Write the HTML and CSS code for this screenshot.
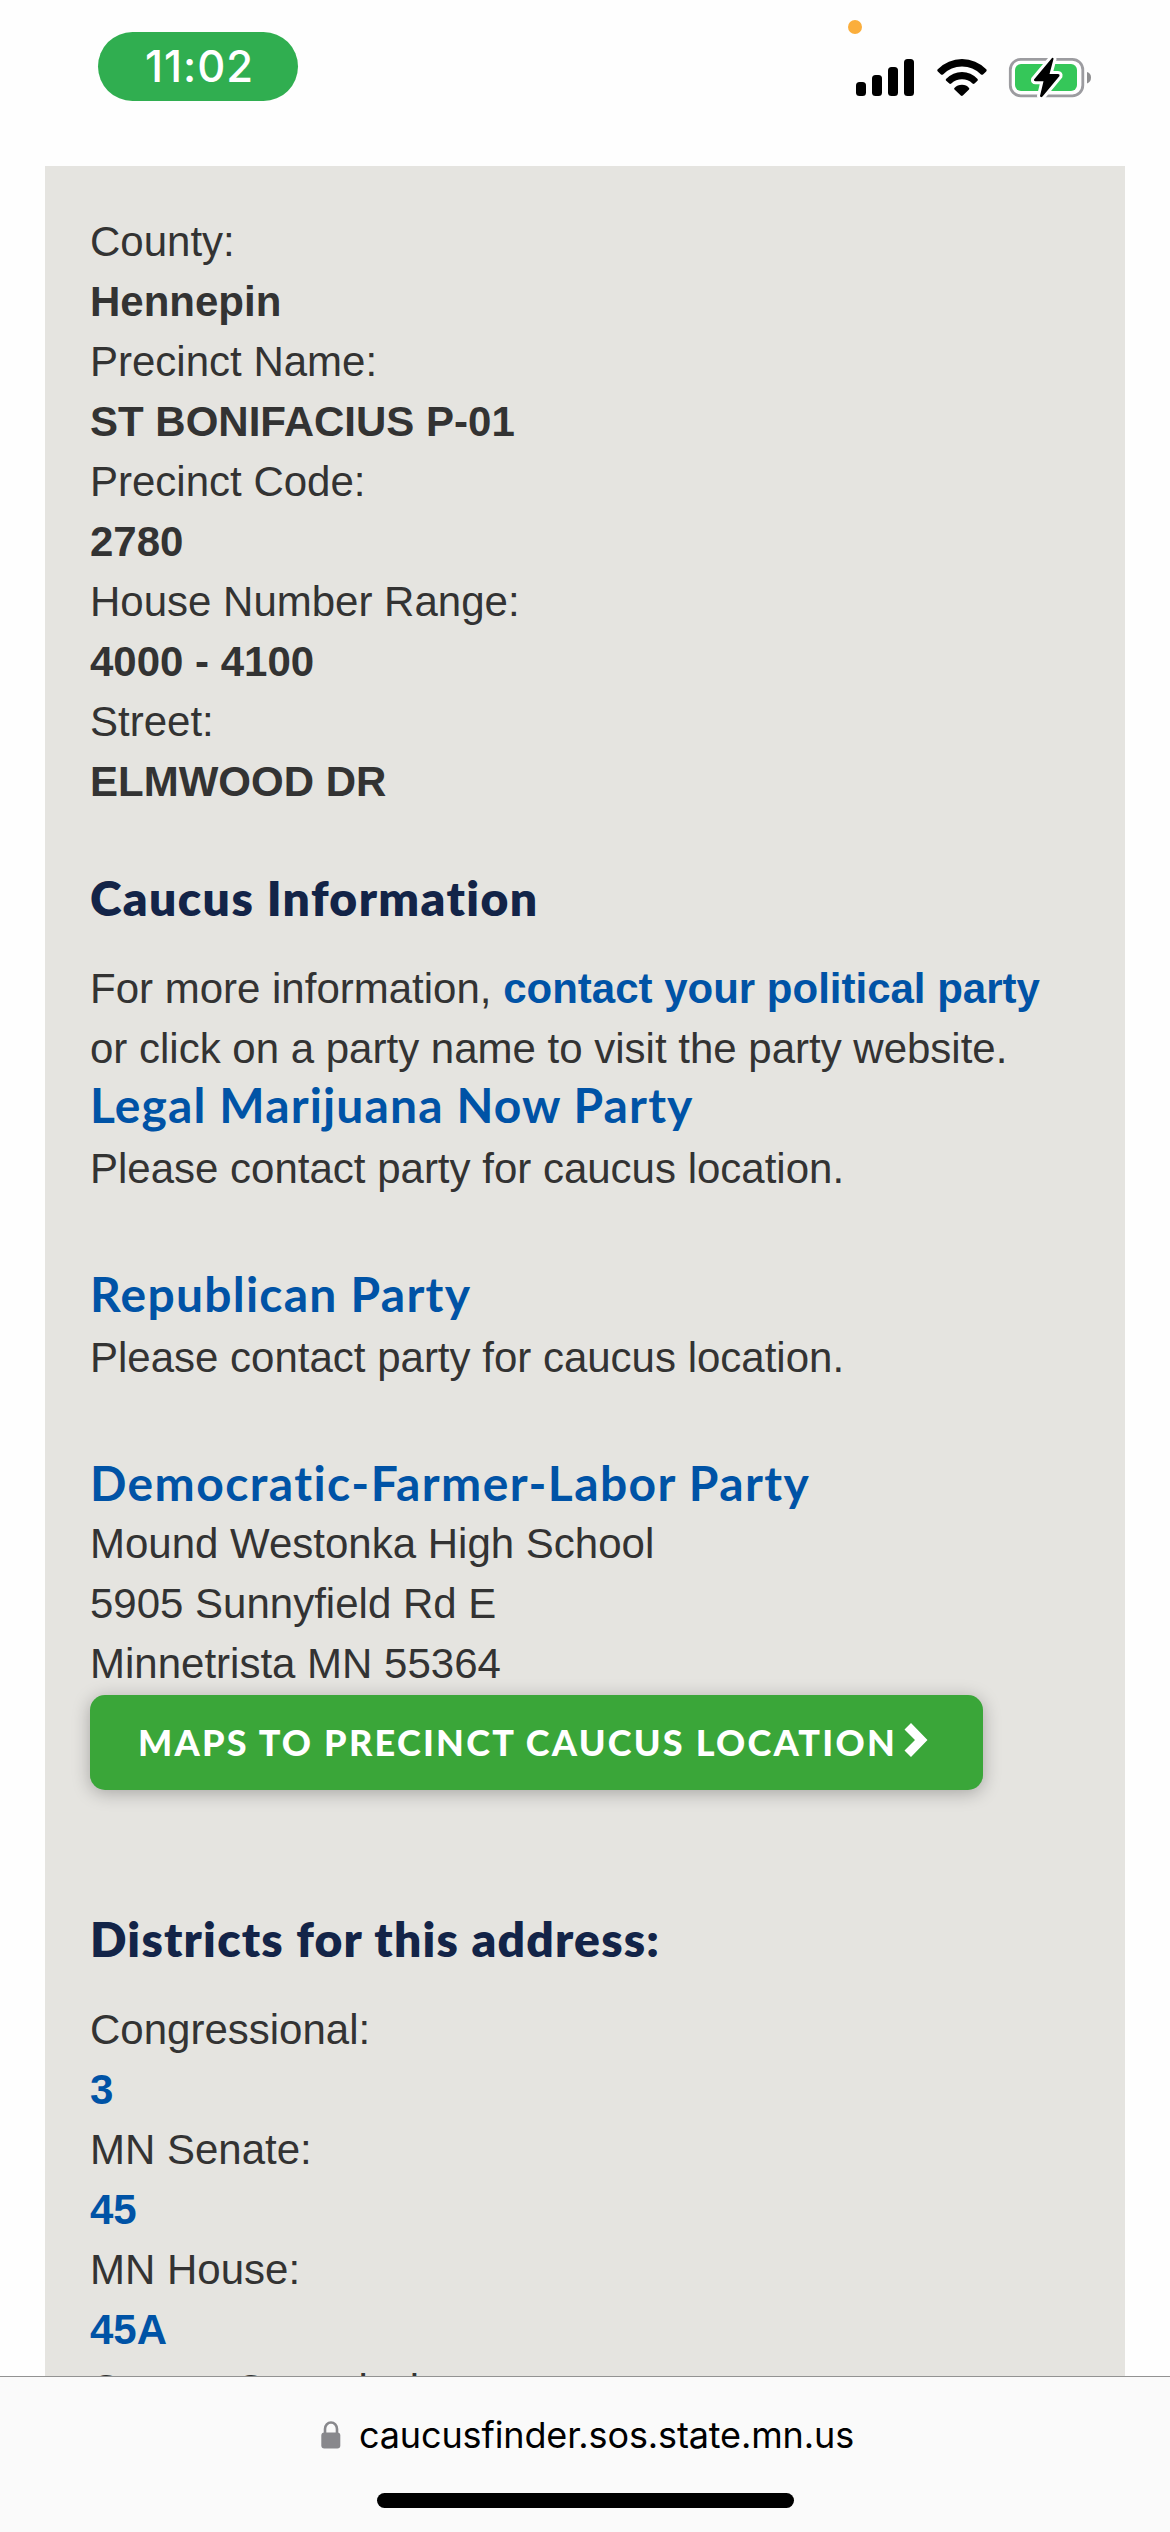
FILE: index.html
```html
<!DOCTYPE html>
<html lang="en">
<head>
<meta charset="utf-8">
<title>Caucus Finder</title>
<link rel="stylesheet" href="styles.css">
</head>
<body>
<div class="screen">
  <header class="status">
    <div class="time">11:02</div>
    <svg class="indicators" width="260" height="110" viewBox="840 0 260 110" aria-hidden="true">
      <circle cx="855" cy="27" r="7" fill="#fbae3c"/>
      <rect x="856" y="82" width="10" height="14" rx="3.5"/>
      <rect x="872" y="75" width="10" height="21" rx="3.5"/>
      <rect x="888" y="67" width="10" height="29" rx="3.5"/>
      <rect x="904" y="59" width="10" height="37" rx="3.5"/>
      <path d="M937.5 69.5Q948 59 962 59T986.500 69.500Q987 70.500 986.200 71.500L983 74.500Q982 75.200 981 74.400Q973 66.500 962 66.500T943 74.400Q942 75.200 941 74.500L937.800 71.500Q936.800 70.500 937.500 69.500Z"/>
      <path d="M946 79Q953 72 962 72T977.600 79Q978.200 80 977.500 80.800L974.500 83.600Q973.500 84.300 972.500 83.500Q968 79.300 962 79.300T951.300 83.500Q950.300 84.300 949.300 83.600L946.200 80.800Q945.300 80 946 79Z"/>
      <path d="M954.400 88Q957.500 84.800 962 84.800T969 88Q969.700 88.800 969 89.500L962.800 95.600Q961.800 96.500 960.800 95.600L954.500 89.500Q953.700 88.800 954.400 88Z"/>
      <rect x="1010.300" y="59.300" width="72.500" height="36.500" rx="10.500" fill="#fff" stroke="#9c9ca0" stroke-width="2.800"/>
      <path d="M1087 72Q1091 73 1091 77.500T1087 83.500Z" fill="#8e8e90"/>
      <rect x="1015" y="64" width="62" height="27" rx="6" fill="#35c759"/>
      <path class="bolt" d="M1052 58L1034 79.500Q1033.500 81.300 1035.500 81.300H1043.500L1040 96Q1040.500 98 1042.500 96.500L1059.500 76Q1060 74 1058 74H1049.500L1053.500 59Q1053.500 57 1052 58Z"/>
    </svg>
  </header>

  <main class="panel">
    <dl class="facts">
      <dt>County:</dt><dd>Hennepin</dd>
      <dt>Precinct Name:</dt><dd>ST BONIFACIUS P-01</dd>
      <dt>Precinct Code:</dt><dd>2780</dd>
      <dt>House Number Range:</dt><dd>4000 - 4100</dd>
      <dt>Street:</dt><dd>ELMWOOD DR</dd>
    </dl>

    <h2>Caucus Information</h2>
    <p>For more information, <a href="#">contact your political party</a><br>or click on a party name to visit the party website.</p>

    <section class="party">
      <h3><a href="#">Legal Marijuana Now Party</a></h3>
      <p>Please contact party for caucus location.</p>
    </section>
    <section class="party republican">
      <h3><a href="#">Republican Party</a></h3>
      <p>Please contact party for caucus location.</p>
    </section>
    <section class="party located">
      <h3><a href="#">Democratic-Farmer-Labor Party</a></h3>
      <p>Mound Westonka High School<br>5905 Sunnyfield Rd E<br>Minnetrista MN 55364</p>
      <a class="button" href="#"><span>MAPS TO PRECINCT CAUCUS LOCATION</span>
        <svg width="24" height="34" viewBox="0 0 24 34" aria-hidden="true"><path d="M7 0L23.500 17L7 34L.5 27.500L11 17L.5 6.500Z" fill="#fff"/></svg>
      </a>
    </section>

    <h2 class="districts">Districts for this address:</h2>
    <dl class="facts">
      <dt>Congressional:</dt><dd><a href="#">3</a></dd>
      <dt>MN Senate:</dt><dd><a href="#">45</a></dd>
      <dt>MN House:</dt><dd><a href="#">45A</a></dd>
      <dt>County Commissioner:</dt>
    </dl>
  </main>

  <footer class="browser-bar">
    <div class="address">
      <svg width="20" height="28" viewBox="0 0 20 28" aria-hidden="true"><path d="M4 12V8a6 6.500 0 0 1 12 0V12" fill="none" stroke="#88888c" stroke-width="2.600"/><rect x=".3" y="11.500" width="19" height="16" rx="3" fill="#88888c"/></svg>
      <span>caucusfinder.sos.state.mn.us</span>
    </div>
    <div class="home"></div>
  </footer>
</div>
</body>
</html>
```
FILE: styles.css
```css
* { box-sizing: border-box; }

body {
  margin: 0;
  background: #fefefe;
  color: #333;
  font: 42px/60px "Liberation Sans", Arial, sans-serif;
}

h2, h3, p, dl, dd { margin: 0; }

a { color: #0053a6; text-decoration: none; font-weight: 700; }

.screen {
  display: flex;
  flex-direction: column;
  width: 1170px;
  height: 2532px;
  overflow: hidden;
}

.status {
  display: flex;
  flex: 0 0 166px;
  justify-content: space-between;
  align-items: flex-start;
  padding: 0 70px 0 98px;
}

.time {
  width: 200px;
  height: 69px;
  margin-top: 32px;
  padding-left: 3px;
  border-radius: 35px;
  background: #30ae50;
  color: #fff;
  font: 500 43.5px/69px Inter, sans-serif;
  letter-spacing: 1px;
  text-align: center;
}

.bolt { stroke: #fff; stroke-width: 6px; paint-order: stroke; stroke-linejoin: round; }

.panel {
  flex: 0 0 2210px;
  margin: 0 45px;
  padding: 46px 45px 0;
  overflow: hidden;
  background: #e5e4e0;
}

.facts dd { font-weight: 700; }

h2, h3, .button { font-family: Lato, sans-serif; }

h2 {
  margin: 56px 0 31px;
  color: #132448;
  font-size: 48px;
  font-weight: 800;
  line-height: 60px;
  letter-spacing: 1.4px;
}

h3 { margin-bottom: 8px; font-size: 48px; line-height: 52px; letter-spacing: 1.12px; }

.party + .party { margin-top: 69px; }
.republican h3 { letter-spacing: 1.25px; }
.located h3 { margin-bottom: 5px; letter-spacing: 1.4px; }

.button {
  display: flex;
  align-items: center;
  width: 893px;
  height: 95px;
  margin-top: 1px;
  padding-left: 48px;
  gap: 7px;
  border-radius: 15px;
  background: #3aa639;
  box-shadow: 0 3px 18px rgba(0, 0, 0, .28);
  color: #fff;
  font-size: 36px;
  font-weight: 900;
  letter-spacing: 2.25px;
}

.button span { margin-bottom: 2px; }
.button svg { margin-bottom: 6px; }

.districts { margin-top: 119px; letter-spacing: 1.2px; }

.browser-bar {
  flex: 0 0 156px;
  border-top: 1px solid #929292;
  background: #fafafa;
}

.address {
  display: flex;
  align-items: center;
  padding: 28px 0 0 321px;
  color: #000;
  font: 36px/60px Inter, sans-serif;
  letter-spacing: -.13px;
  gap: 18px;
}

.home {
  width: 417px;
  height: 15px;
  margin: 28px auto 0;
  border-radius: 8px;
  background: #000;
}
```
